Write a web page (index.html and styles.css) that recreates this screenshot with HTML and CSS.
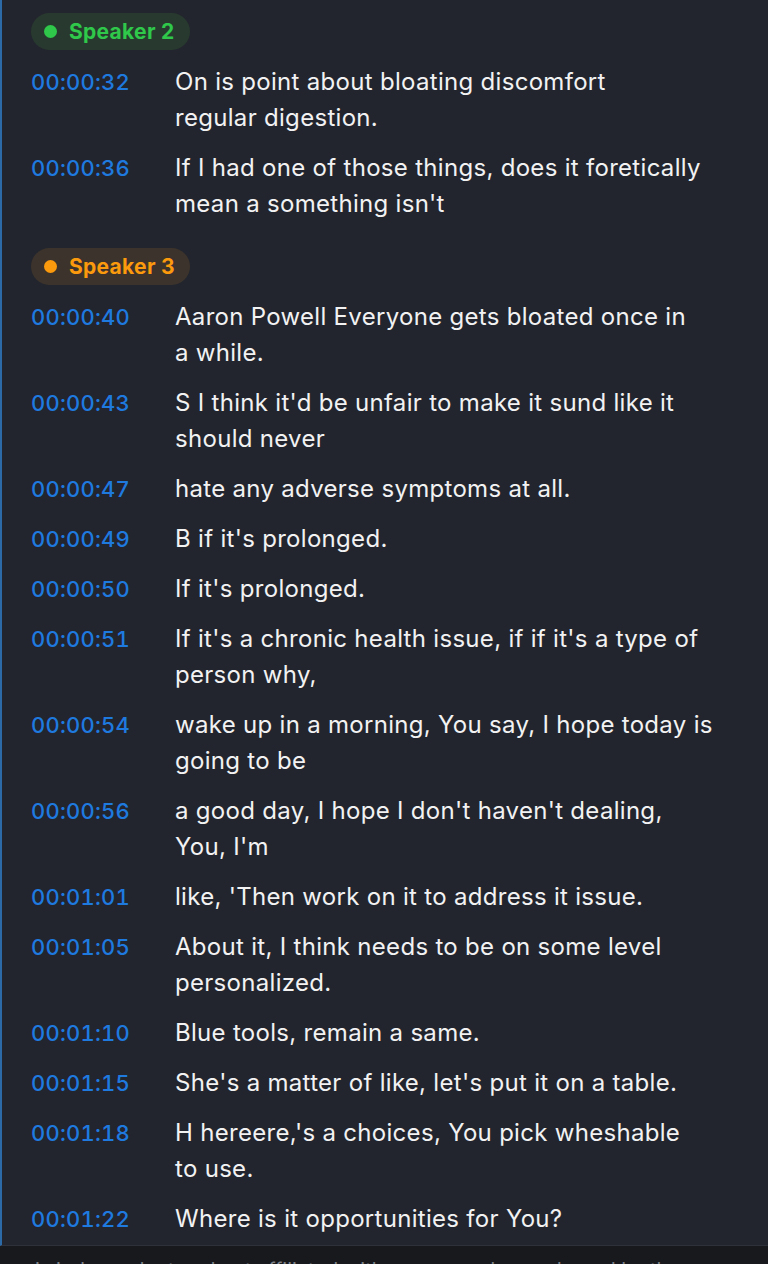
FILE: index.html
```html
<!DOCTYPE html>
<html lang="en">
<head>
<meta charset="utf-8">
<title>Transcript</title>
<link rel="stylesheet" href="styles.css">
</head>
<body>
<main class="panel">
  <section class="group">
    <div class="speaker speaker-green"><span class="dot"></span>Speaker 2</div>
    <div class="row"><span class="time">00:00:32</span><p class="text">On is point about bloating discomfort<br>regular digestion.</p></div>
    <div class="row"><span class="time">00:00:36</span><p class="text">If I had one of those things, does it foretically<br>mean a something isn't</p></div>
  </section>
  <section class="group">
    <div class="speaker speaker-orange"><span class="dot"></span>Speaker 3</div>
    <div class="row"><span class="time">00:00:40</span><p class="text">Aaron Powell Everyone gets bloated once in<br>a while.</p></div>
    <div class="row"><span class="time">00:00:43</span><p class="text">S I think it'd be unfair to make it sund like it<br>should never</p></div>
    <div class="row"><span class="time">00:00:47</span><p class="text">hate any adverse symptoms at all.</p></div>
    <div class="row"><span class="time">00:00:49</span><p class="text">B if it's prolonged.</p></div>
    <div class="row"><span class="time">00:00:50</span><p class="text">If it's prolonged.</p></div>
    <div class="row"><span class="time">00:00:51</span><p class="text">If it's a chronic health issue, if if it's a type of<br>person why,</p></div>
    <div class="row"><span class="time">00:00:54</span><p class="text">wake up in a morning, You say, I hope today is<br>going to be</p></div>
    <div class="row"><span class="time">00:00:56</span><p class="text">a good day, I hope I don't haven't dealing,<br>You, I'm</p></div>
    <div class="row"><span class="time">00:01:01</span><p class="text">like, 'Then work on it to address it issue.</p></div>
    <div class="row"><span class="time">00:01:05</span><p class="text">About it, I think needs to be on some level<br>personalized.</p></div>
    <div class="row"><span class="time">00:01:10</span><p class="text">Blue tools, remain a same.</p></div>
    <div class="row"><span class="time">00:01:15</span><p class="text">She's a matter of like, let's put it on a table.</p></div>
    <div class="row"><span class="time">00:01:18</span><p class="text">H hereere,'s a choices, You pick wheshable<br>to use.</p></div>
    <div class="row"><span class="time">00:01:22</span><p class="text">Where is it opportunities for You?</p></div>
  </section>
</main>
<footer class="footer">is independent and not affiliated with, sponsored or endorsed by the</footer>
</body>
</html>
```

FILE: styles.css
```css
html, body {
  margin: 0;
  padding: 0;
  background: #18191d;
  font-family: Inter, "Noto Sans", sans-serif;
}

.panel {
  background: #22252d;
  border-left: 2px solid #2b6aa6;
  border-bottom: 1px solid #2e3139;
  padding: 13px 0 8px 29px;
  display: flex;
  flex-direction: column;
  gap: 26px;
}

.group {
  display: flex;
  flex-direction: column;
  gap: 14px;
}

.speaker {
  align-self: flex-start;
  display: inline-flex;
  align-items: center;
  gap: 12px;
  height: 37px;
  padding: 0 15px 0 13px;
  border-radius: 19px;
  font-size: 21px;
  font-weight: 700;
  letter-spacing: 0.3px;
}

.dot {
  width: 13px;
  height: 13px;
  border-radius: 50%;
  background: currentColor;
}

.speaker-green {
  background: #283a2f;
  color: #2fc84a;
}

.speaker-orange {
  background: #3c332c;
  color: #fb9a0c;
}

.row {
  display: grid;
  grid-template-columns: 144px 1fr;
  align-items: start;
}

.time {
  font-size: 22px;
  line-height: 36px;
  font-weight: 500;
  color: #1f7ae0;
  font-variant-numeric: tabular-nums;
  letter-spacing: 0.2px;
}

.text {
  margin: 0;
  font-size: 24px;
  line-height: 36px;
  color: #f2f2f3;
  letter-spacing: 0.3px;
  white-space: nowrap;
}

.footer {
  padding: 10px 0 0 35px;
  font-size: 20px;
  line-height: 28px;
  color: #7d8087;
  white-space: nowrap;
  overflow: hidden;
}
```
